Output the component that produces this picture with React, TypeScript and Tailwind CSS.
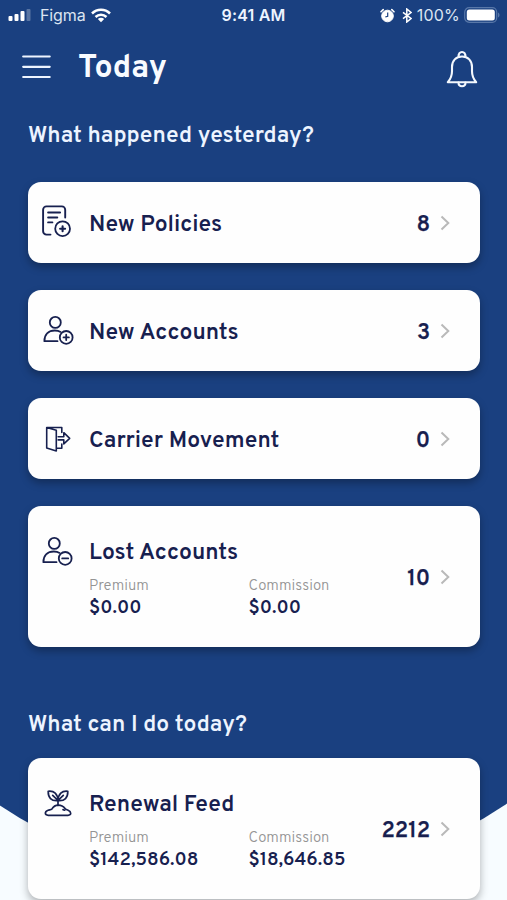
import type { ReactNode } from 'react';

const NAVY = '#17204f';

function Svg({ w, h, className, sw = 1.7, color = NAVY, children }: { w: number; h: number; className?: string; sw?: number; color?: string; children: ReactNode }) {
  return (
    <svg width={w} height={h} viewBox={`0 0 ${w} ${h}`} fill="none" stroke={color} strokeWidth={sw} strokeLinecap="round" strokeLinejoin="round" className={className}>
      {children}
    </svg>
  );
}

// Every card icon is drawn on a canvas of about 32 x 32.
const PolicyIcon = () => (
  <Svg w={32} h={32} sw={1.9}>
    <path d="M10.5 29.6H6.5a3.4 3.4 0 0 1-3.4-3.4V4.8a3.4 3.4 0 0 1 3.4-3.4h15.3a3.4 3.4 0 0 1 3.4 3.4v7.7M8.1 7.5h12M8.1 12.5h9.2M8.1 17.4h4.3" />
    <circle cx="22.6" cy="23.7" r="7.4" strokeWidth="1.8" />
    <path d="M22.6 21.2v5M20.1 23.7h5" strokeWidth="2.1" />
  </Svg>
);

const PersonIcon = ({ minus = false, className }: { minus?: boolean; className?: string }) => (
  <Svg w={33} h={32} sw={1.8} className={className}>
    <circle cx="14.3" cy="8.4" r="5.5" />
    <path d="M16.5 27.2H3.4c0-7 4.4-10.7 10.4-10.7 2.4 0 4.300.5 5.800 1.400" />
    <circle cx="25.200" cy="23.400" r="6.400" />
    <path d={minus ? 'M22.200 23.400h6' : 'M25.200 20.700v5.400M22.500 23.400h5.400'} />
  </Svg>
);

const DoorIcon = () => (
  <Svg w={32} h={32} sw={1.6} className="mt-[4px]">
    <path d="M6.700 4.500l9.600 2.700v20.700l-9.600-2.900ZM6.700 4.500h15.100v5M21.800 21v4.300h-5.500M18.200 13.700h5.600V9.700l5.900 5.600-5.900 5.600v-4h-5.600" />
  </Svg>
);

const SproutIcon = () => (
  <Svg w={32} h={32} sw={1.7} className="mt-[1px] ml-[1px]">
    <path d="M17 18.500v-5M17 13.500C16.600 6.800 13.200 3.600 7.200 4.300 7 10.500 10.200 14.300 17 13.500ZM17 13.500C17.400 6.800 20.800 3.600 26.800 4.300 27 10.500 23.800 14.300 17 13.500ZM11.700 8.300l5.300 5.200 5.300-5.200" />
    <path d="M7.200 28.300h19.800c3.700 0 3.400-3.800.1-5.100-1.700-.7-2.500-.6-3.300-1.900-1.600-2.300-4-3.200-6.600-3.200-3.200 0-5 1.700-6.400 4-1 .8-2.300.7-3.700 1.200-3.800 1.400-3.500 5 .1 5Z" />
    <path d="M22 22.600l1.700.6" />
  </Svg>
);

const Amount = ({ label, value }: { label: string; value: string }) => (
  <div className="w-[159.500px] shrink-0">
    <div className="h-[19px] text-[14.900px] leading-[19px] font-light text-[#949494]">{label}</div>
    <div className="h-[24px] text-[18.800px] leading-[24px] font-semibold">{value}</div>
  </div>
);

const Count = ({ value }: { value: string }) => (
  <div className="ml-auto flex items-center self-center">
    <span className="pt-[6px] text-[22px] leading-[26px] font-semibold tracking-[-0.1px] [-webkit-text-stroke:0.25px]">{value}</span>
    <Svg w={12} h={18} sw={2} color="#b9b9b9" className="mr-[29px] ml-[9px]">
      <path d="M2.500 2.500l6.800 6.500-6.800 6.500" strokeLinecap="butt" strokeLinejoin="miter" />
    </Svg>
  </div>
);

const cardCls = 'relative flex w-[452px] rounded-[13px] bg-[#fefefe] text-[#17204f] shadow-[0_4px_8px_rgba(0,0,0,0.3)]';
const titleCls = 'text-[22.900px] leading-[28px] font-semibold whitespace-nowrap';

const Card = ({ icon, title, count }: { icon: ReactNode; title: string; count: string }) => (
  <div className={`${cardCls} h-[81px] items-center`}>
    <div className="ml-[12px] w-[49px] pb-[3px]">{icon}</div>
    <div className={`${titleCls} pt-[6px]`}>{title}</div>
    <Count value={count} />
  </div>
);

const TallCard = ({ icon, title, count, premium, commission }: { icon: ReactNode; title: string; count: string; premium: string; commission: string }) => (
  <div className={`${cardCls} h-[141px]`}>
    <div className="ml-[12px] w-[49px] shrink-0 pt-[28px]">{icon}</div>
    <div className="w-[265px] shrink-0 pt-[34px]">
      <div className={`${titleCls} h-[37px]`}>{title}</div>
      <div className="flex">
        <Amount label="Premium" value={premium} />
        <Amount label="Commission" value={commission} />
      </div>
    </div>
    <Count value={count} />
  </div>
);

const StatusBar = () => (
  <div className="grid h-[30px] grid-cols-3 items-center font-[Inter,sans-serif] text-[16px]">
    <div className="flex items-center pl-[8px] text-[#dce5f2]">
      <svg width="24" height="14" viewBox="0 0 24 14" fill="#fff">
        <rect x=".5" y="8" width="4" height="5" rx="1" />
        <rect x="6.500" y="6" width="4" height="7" rx="1" />
        <rect x="12.500" y="3" width="4" height="10" rx="1" />
        <rect x="18.500" y="1" width="4" height="12" rx="1" opacity=".28" />
      </svg>
      <span className="ml-[8px] text-[16px] tracking-[-0.1px]">Figma</span>
      <svg width="20" height="15" viewBox="0 0 20 15" fill="none" stroke="#fff" strokeWidth="2.500" className="ml-[5px]">
        <path d="M1 5.500c5-5 13-5 18 0M4.500 9c3.200-3 7.800-3 11 0" />
        <path d="M10 14.300L6.800 11c1.800-1.700 4.600-1.700 6.400 0Z" fill="#fff" stroke="none" />
      </svg>
    </div>
    <div className="text-center text-[16px] font-semibold tracking-[0.2px]">9:41 AM</div>
    <div className="flex items-center justify-end pr-[7px] text-[#dce5f2]">
      <svg width="15" height="15" viewBox="0 0 15 15" fill="none" stroke="#fff" className="shrink-0">
        <circle cx="7.500" cy="8" r="5.800" fill="#fff" />
        <path d="M7.700 4.500V8.200L5.300 9" stroke="#1a4080" strokeWidth="1.200" />
        <path d="M1 3.800L3.200 1.600M14 3.800l-2.200-2.200" strokeWidth="1.600" strokeLinecap="round" />
      </svg>
      <svg width="10" height="15" viewBox="0 0 10 15" fill="none" stroke="#fff" strokeWidth="1.500" className="ml-[7px] shrink-0">
        <path d="M1 4.300l8 6.200-4.200 3.500V1L9 4.500 1 10.700" />
      </svg>
      <span className="ml-[5px] text-[16px] tracking-[0.2px]">100%</span>
      <svg width="36" height="16" viewBox="0 0 36 16" className="ml-[4px] shrink-0">
        <rect x=".700" y=".700" width="32" height="14.600" rx="4.500" fill="none" stroke="#5877a8" strokeWidth="1.200" />
        <rect x="2.800" y="2.500" width="28" height="11" rx="2.500" fill="#fff" />
        <path d="M34 5.500c2 .8 2 4.200 0 5Z" fill="#5877a8" />
      </svg>
    </div>
  </div>
);

const headingCls = 'text-[22.900px] leading-[28px] font-semibold whitespace-nowrap';

export default function App() {
  return (
    <div className="relative h-[900px] w-[507px] overflow-hidden bg-[#f7fcff] font-[Overpass,Roboto,sans-serif] text-[#edf4ff]">
      <div className="absolute top-0 left-[-201px] h-[882px] w-[906px] rounded-b-[453px] bg-[#1a4080]" />
      <div className="relative">
        <StatusBar />
        <header className="flex h-[74px] items-center pr-[29px] pl-[22px]">
          <Svg w={30} h={26} sw={2.2} color="#edf4ff">
            <path d="M1.200 2.500h26.500M1.200 12.800h26.500M1.200 23h26.500" />
          </Svg>
          <h1 className="ml-[26px] pt-[4px] text-[32px] leading-[36px] font-bold text-[#f8fbff]">Today</h1>
          <Svg w={32} h={38} sw={2.1} color="#f4f8fd" className="mt-[4px] ml-auto">
            <path d="M1.800 32.300c2.600-3 4.200-6.600 4.200-11V17C6 10.700 10 6.500 16 6.500S26 10.700 26 17v4.300c0 4.400 1.600 8 4.200 11Z" />
            <path d="M12.800 6.800C11.500.3 20.500.3 19.200 6.800M12.500 32.500c0 5 7 5 7 0" />
          </Svg>
        </header>
        <main className="pl-[28px]">
          <h2 className={`${headingCls} h-[78px] pt-[19px]`}>What happened yesterday?</h2>
          <div className="flex flex-col gap-[27px]">
            <Card icon={<PolicyIcon />} title="New Policies" count="8" />
            <Card icon={<PersonIcon className="mt-[1px] ml-[1px]" />} title="New Accounts" count="3" />
            <Card icon={<DoorIcon />} title="Carrier Movement" count="0" />
            <TallCard icon={<PersonIcon minus className="mt-[1px]" />} title="Lost Accounts" count="10" premium="$0.00" commission="$0.00" />
          </div>
          <h2 className={`${headingCls} h-[111px] pt-[65px]`}>What can I do today?</h2>
          <TallCard icon={<SproutIcon />} title="Renewal Feed" count="2212" premium="$142,586.08" commission="$18,646.85" />
        </main>
      </div>
    </div>
  );
}
